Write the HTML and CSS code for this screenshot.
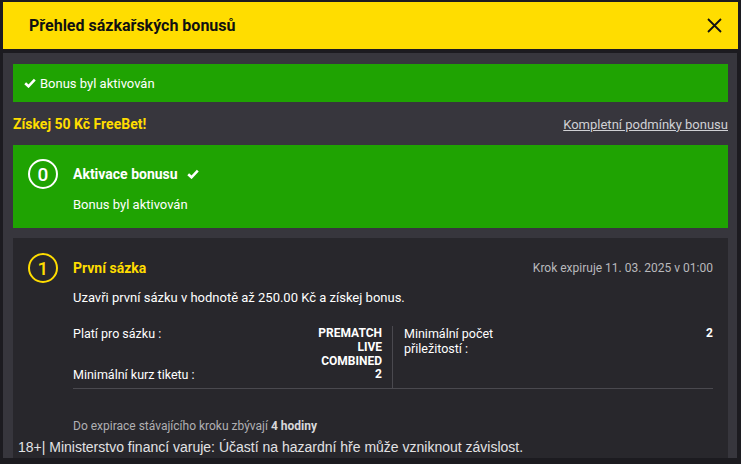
FILE: index.html
```html
<!DOCTYPE html>
<html lang="cs">
<head>
<meta charset="utf-8">
<title>Přehled sázkařských bonusů</title>
<link rel="stylesheet" href="styles.css">
</head>
<body>
<div class="modal">
  <header class="modal-header">
    <h1 class="modal-title">Přehled sázkařských bonusů</h1>
    <svg class="close" width="15" height="15" viewBox="0 0 15 15"><path d="M1 1 L14 14 M14 1 L1 14" stroke="#111" stroke-width="1.8" fill="none"/></svg>
  </header>
  <main class="panel">
    <div class="banner">
      <svg class="check" width="12" height="10" viewBox="0 0 12 10"><path d="M1.2 5.2 L4.5 8.3 L10.8 1.6" stroke="#fff" stroke-width="2.6" fill="none"/></svg>
      <span>Bonus byl aktivován</span>
    </div>
    <div class="offer-row">
      <span class="offer-title">Získej 50 Kč FreeBet!</span>
      <a class="terms" href="#">Kompletní podmínky bonusu</a>
    </div>
    <section class="step step-done">
      <div class="circle">0</div>
      <div class="step-body">
        <div class="step-head">
          <span class="step-title">Aktivace bonusu</span>
          <svg class="check" width="12" height="10" viewBox="0 0 12 10"><path d="M1.2 5.2 L4.5 8.3 L10.8 1.6" stroke="#fff" stroke-width="2.6" fill="none"/></svg>
        </div>
        <p class="step-desc">Bonus byl aktivován</p>
      </div>
    </section>
    <section class="step step-active">
      <div class="step-main">
        <div class="circle circle-yellow">1</div>
        <div class="step-body">
          <div class="step-head">
            <span class="step-title yellow">První sázka</span>
            <span class="expires">Krok expiruje 11. 03. 2025 v 01:00</span>
          </div>
          <p class="step-desc desc-2">Uzavři první sázku v hodnotě až 250.00 Kč a získej bonus.</p>
          <div class="conditions">
            <div class="cond-col left">
              <div class="cond">
                <span class="cond-label">Platí pro sázku :</span>
                <span class="cond-value">PREMATCH<br>LIVE<br>COMBINED</span>
              </div>
              <div class="cond">
                <span class="cond-label">Minimální kurz tiketu :</span>
                <span class="cond-value">2</span>
              </div>
            </div>
            <div class="cond-col right">
              <div class="cond">
                <span class="cond-label narrow">Minimální počet přiležitostí :</span>
                <span class="cond-value">2</span>
              </div>
            </div>
          </div>
          <p class="remaining">Do expirace stávajícího kroku zbývají <b>4 hodiny</b></p>
        </div>
      </div>
      <p class="disclaimer">18+| Ministerstvo financí varuje: Účastí na hazardní hře může vzniknout závislost.</p>
    </section>
  </main>
</div>
</body>
</html>
```

FILE: styles.css
```css
* { box-sizing: border-box; }
html, body { margin: 0; padding: 0; }
body {
  background: #1c1b20;
  font-family: Roboto, "Noto Sans", sans-serif;
  color: #fff;
  width: 741px;
  height: 464px;
  overflow: hidden;
}
.modal {
  padding: 2px 3px 0 3px;
  display: flex;
  flex-direction: column;
  gap: 4px;
}
.modal-header {
  background: #ffdd00;
  height: 47px;
  display: flex;
  align-items: center;
  justify-content: space-between;
  padding: 0 16px 0 26px;
}
.modal-title {
  margin: 0;
  font-size: 16px;
  font-weight: 700;
  color: #111;
}
.close { display: block; }
.panel {
  background: #37363d;
  margin-right: 1px;
  height: 405px;
  padding: 11px 9px 0 10px;
}
.banner {
  background: #1fa302;
  height: 38px;
  display: flex;
  align-items: center;
  gap: 4px;
  padding-left: 11px;
  font-size: 13px;
}
.offer-row {
  height: 43px;
  display: flex;
  align-items: center;
  justify-content: space-between;
  padding-top: 1px;
}
.offer-title {
  color: #ffdd00;
  font-weight: 700;
  font-size: 14px;
}
.terms {
  color: #d0d0d4;
  font-size: 13px;
  text-decoration: underline;
}
.step {
  display: flex;
  gap: 15px;
  padding: 14px 15px 0 15px;
}
.step-done {
  background: #1fa302;
  height: 83px;
}
.step-done .step-desc { padding-top: 8px; }
.circle {
  width: 30px;
  height: 30px;
  flex: none;
  border: 2px solid #fff;
  border-radius: 50%;
  display: flex;
  align-items: center;
  justify-content: center;
  font-size: 19px;
  font-weight: 500;
  line-height: 1;
}
.circle-yellow { border-color: #ffdd00; color: #ffdd00; }
.step-body { flex: 1; }
.step-head {
  height: 30px;
  display: flex;
  align-items: center;
  gap: 9px;
}
.step-title { font-weight: 700; font-size: 14px; }
.yellow { color: #ffdd00; }
.step-desc {
  margin: 0;
  font-size: 13px;
  line-height: 16px;
  padding-top: 6px;
}
.step-active {
  background: #28272c;
  margin-top: 10px;
  height: 220px;
  flex-direction: column;
  gap: 0;
  padding: 15px 0 0 0;
}
.step-main {
  display: flex;
  gap: 15px;
  padding: 0 15px;
}
.step-active .step-head { justify-content: space-between; }
.expires { color: #b9b9bc; font-size: 12px; }
.desc-2 { padding-top: 7px; }
.conditions {
  margin-top: 20px;
  display: grid;
  grid-template-columns: 1fr 1fr;
  border-bottom: 1px solid #4a494f;
}
.cond-col { padding-bottom: 6px; }
.cond-col.left { padding-right: 10px; border-right: 1px solid #4a494f; }
.cond-col.right { padding-left: 11px; }
.cond {
  display: flex;
  justify-content: space-between;
  align-items: flex-start;
  font-size: 12.5px;
}
.cond + .cond { margin-top: -1px; }
.cond-label { line-height: 15px; }
.cond-label.narrow { width: 110px; }
.cond-value {
  font-weight: 700;
  font-size: 12px;
  line-height: 14px;
  text-align: right;
}
.remaining {
  margin: 30px 0 0 0;
  font-size: 12px;
  color: #b0b0b3;
}
.remaining b { color: #d8d8da; }
.disclaimer {
  margin: 6px 0 0 5px;
  font-family: "Liberation Sans", Arial, sans-serif;
  font-size: 14px;
  line-height: 16px;
  color: #e2e2e4;
}
```
